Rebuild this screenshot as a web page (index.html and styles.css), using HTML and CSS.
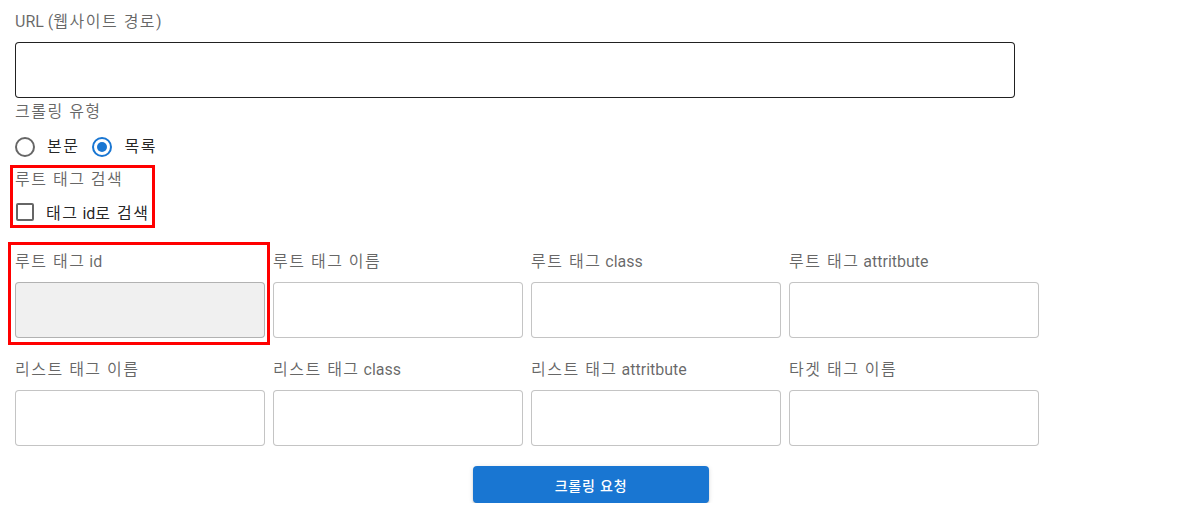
FILE: index.html
```html
<!DOCTYPE html>
<html lang="ko">
<head>
<meta charset="utf-8">
<title>크롤링</title>
<link rel="stylesheet" href="styles.css">
</head>
<body>
<div class="page">
  <div class="label">URL (<span class="ko">웹사이트 경로</span>)</div>
  <input class="url-input" type="text">

  <div class="label type-label"><span class="ko">크롤링 유형</span></div>
  <div class="radio-row">
    <label class="radio-item"><span class="radio"></span><span class="radio-text ko">본문</span></label>
    <label class="radio-item"><span class="radio checked"></span><span class="radio-text ko">목록</span></label>
  </div>

  <div class="highlight search-box">
    <div class="label"><span class="ko">루트 태그 검색</span></div>
    <label class="check-row"><span class="checkbox"></span><span class="check-text"><span class="ko">태그</span> id<span class="ko">로 검색</span></span></label>
  </div>

  <div class="grid">
    <div class="field highlight id-field">
      <div class="label"><span class="ko">루트 태그</span> id</div>
      <input class="box disabled" type="text" disabled>
    </div>
    <div class="field">
      <div class="label"><span class="ko">루트 태그 이름</span></div>
      <input class="box" type="text">
    </div>
    <div class="field">
      <div class="label"><span class="ko">루트 태그</span> class</div>
      <input class="box" type="text">
    </div>
    <div class="field">
      <div class="label"><span class="ko">루트 태그</span> attritbute</div>
      <input class="box" type="text">
    </div>
    <div class="field">
      <div class="label"><span class="ko">리스트 태그 이름</span></div>
      <input class="box" type="text">
    </div>
    <div class="field">
      <div class="label"><span class="ko">리스트 태그</span> class</div>
      <input class="box" type="text">
    </div>
    <div class="field">
      <div class="label"><span class="ko">리스트 태그</span> attritbute</div>
      <input class="box" type="text">
    </div>
    <div class="field">
      <div class="label"><span class="ko">타겟 태그 이름</span></div>
      <input class="box" type="text">
    </div>
  </div>

  <div class="actions">
    <button class="submit" type="button"><span class="ko-btn">크롤링 요청</span></button>
  </div>
</div>
</body>
</html>
```

FILE: styles.css
```css
* { box-sizing: border-box; }
html, body { margin: 0; padding: 0; background: #fff; }
body {
  font-family: Roboto, "Noto Sans CJK KR", "Liberation Sans", sans-serif;
  font-size: 16px;
}
.ko { letter-spacing: 1.5px; }
.ko-btn { letter-spacing: 0.8px; }
.page {
  padding: 10px 0 0 15px;
}
.label {
  color: rgba(0, 0, 0, 0.6);
  font-size: 16px;
  line-height: 24px;
  height: 24px;
  white-space: nowrap;
}
.url-input {
  display: block;
  width: 1000px;
  height: 56px;
  margin-top: 8px;
  border: 1px solid rgba(0, 0, 0, 0.87);
  border-radius: 4px;
  outline: none;
  font: inherit;
  padding: 0 14px;
}
.type-label { margin-top: 2px; }
.radio-row {
  display: flex;
  align-items: center;
  height: 24px;
  margin-top: 11px;
}
.radio-item {
  display: inline-flex;
  align-items: center;
  margin-right: 13px;
  color: rgba(0, 0, 0, 0.87);
  line-height: 24px;
}
.radio {
  width: 20px;
  height: 20px;
  border: 2px solid rgba(0, 0, 0, 0.6);
  border-radius: 50%;
  margin-right: 12px;
  position: relative;
}
.radio.checked { border-color: #1976d2; }
.radio.checked::after {
  content: "";
  position: absolute;
  left: 3px; top: 3px;
  width: 10px; height: 10px;
  border-radius: 50%;
  background: #1976d2;
}
.highlight { border: 3px solid #ff0000; }
.search-box {
  display: inline-flex;
  flex-direction: column;
  margin: 6px 0 0 -5px;
  padding: 0 3px 1px 2px;
}
.check-row {
  display: flex;
  align-items: center;
  height: 24px;
  margin-top: 8px;
  color: rgba(0, 0, 0, 0.87);
  white-space: nowrap;
}
.checkbox {
  width: 18px;
  height: 18px;
  border: 2px solid rgba(0, 0, 0, 0.6);
  border-radius: 2px;
  margin-left: 1px;
  margin-right: 12px;
}
.grid {
  display: grid;
  grid-template-columns: repeat(4, 250px);
  column-gap: 8px;
  row-gap: 20px;
  margin-top: 22px;
}
.field { display: flex; flex-direction: column; }
.field .label { margin-bottom: 8px; }
.id-field {
  margin: -8px -5px -7px -7px;
  padding: 5px 2px 4px 4px;
}
.box {
  display: block;
  width: 100%;
  height: 56px;
  border: 1px solid rgba(0, 0, 0, 0.23);
  border-radius: 4px;
  outline: none;
  font: inherit;
  background: #fff;
  padding: 0 14px;
}
.box.disabled {
  background: #f0f0f0;
  border-color: rgba(0, 0, 0, 0.26);
}
.actions {
  display: flex;
  justify-content: center;
  padding-right: 19px;
  margin-top: 20px;
}
.submit {
  width: 236px;
  height: 37px;
  border: none;
  border-radius: 4px;
  background: #1976d2;
  color: #fff;
  font-family: Roboto, "Noto Sans CJK KR", sans-serif;
  font-size: 14px;
  font-weight: 500;
  box-shadow: 0 3px 1px -2px rgba(0,0,0,0.2), 0 2px 2px 0 rgba(0,0,0,0.14), 0 1px 5px 0 rgba(0,0,0,0.12);
  cursor: pointer;
}
```
